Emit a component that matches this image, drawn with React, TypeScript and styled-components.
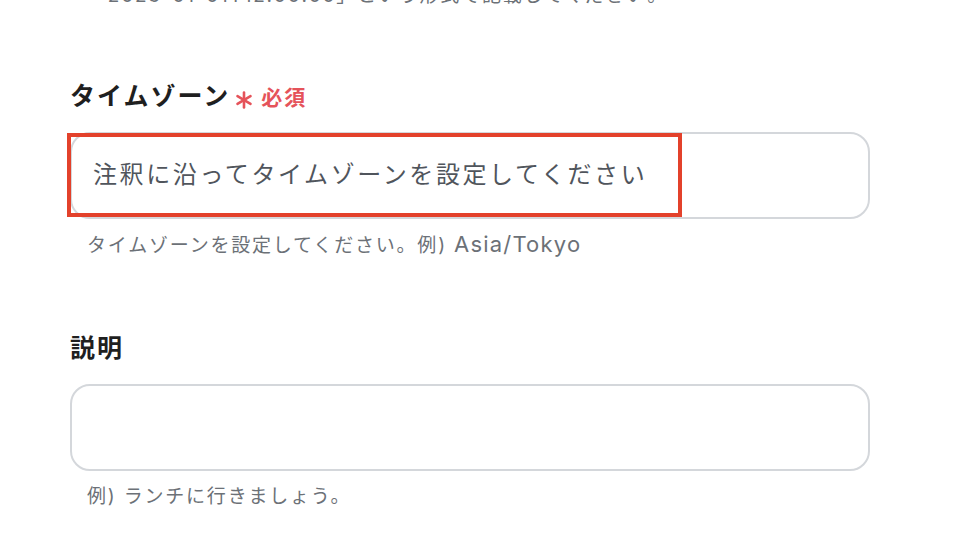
import React from "react";
import styled, { createGlobalStyle } from "styled-components";

const Global = createGlobalStyle`
  html, body { margin: 0; padding: 0; background: #ffffff; }
  body {
    font-family: "Inter", "Noto Sans CJK JP", sans-serif;
    -webkit-font-smoothing: antialiased;
  }
  * { box-sizing: border-box; }
`;

const Page = styled.main`
  width: 958px;
  height: 560px;
  overflow: hidden;
  padding-left: 70px;
  display: flex;
  flex-direction: column;
`;

const Field = styled.section`
  width: 800px;
  display: flex;
  flex-direction: column;
  & + & { margin-top: 75px; }
`;

const LabelRow = styled.div`
  height: 32px;
  display: flex;
  align-items: center;
  gap: 5px;
  margin-bottom: 20px;
`;

const Label = styled.label`
  font-size: 25px;
  font-weight: 700;
  letter-spacing: 2px;
  color: #1f1f1f;
  line-height: 32px;
`;

const Required = styled.span`
  display: inline-flex;
  align-items: center;
  gap: 8px;
  color: #e5535a;
  font-size: 21px;
  font-weight: 600;
  letter-spacing: 2px;
  line-height: 32px;
  padding-top: 3px;
`;

const Star = styled.svg`
  width: 18px;
  height: 18px;
  margin-top: 4px;
`;

const InputWrap = styled.div`
  position: relative;
  width: 800px;
`;

const TextInput = styled.input`
  width: 100%;
  height: 87px;
  border: 2px solid #d4d7db;
  border-radius: 20px;
  padding: 0 21px 2px;
  font-family: inherit;
  font-size: 24px;
  letter-spacing: 2.6px;
  color: #333;
  background: #fff;
  outline: none;
  &::placeholder { color: #50555c; opacity: 1; }
`;

const Highlight = styled.div`
  position: absolute;
  left: -3px;
  top: 1px;
  width: 615px;
  height: 84px;
  border: 4px solid #e3412b;
  pointer-events: none;
`;

const Hint = styled.p<{ $top?: boolean }>`
  margin: ${(p) => (p.$top ? "-16px 0 72px" : "14px 0 0")};
  padding-left: 17px;
  height: 24px;
  font-size: 19px;
  line-height: 24px;
  letter-spacing: 1.8px;
  color: #6c7177;
  white-space: nowrap;
`;

const Latin = styled.span`
  letter-spacing: 1.2px;
  font-size: 22px;
  line-height: 1;
`;

const Asterisk = () => (
  <Star viewBox="0 0 18 18" aria-hidden>
    <g stroke="#e5535a" strokeWidth="2.6" strokeLinecap="round">
      <line x1="9" y1="1.5" x2="9" y2="16.5" />
      <line x1="2.5" y1="5.2" x2="15.5" y2="12.8" />
      <line x1="2.5" y1="12.8" x2="15.5" y2="5.2" />
    </g>
  </Star>
);

export default function App() {
  return (
    <>
      <Global />
      <Page>
        <Hint $top>「2023-01-01T12:00:00」という形式で記載してください。</Hint>
        <Field>
          <LabelRow>
            <Label>タイムゾーン</Label>
            <Required>
              <Asterisk />
              必須
            </Required>
          </LabelRow>
          <InputWrap>
            <TextInput placeholder="注釈に沿ってタイムゾーンを設定してください" />
            <Highlight />
          </InputWrap>
          <Hint>
            タイムゾーンを設定してください。例) <Latin>Asia/Tokyo</Latin>
          </Hint>
        </Field>
        <Field>
          <LabelRow>
            <Label>説明</Label>
          </LabelRow>
          <InputWrap>
            <TextInput />
          </InputWrap>
          <Hint>例) ランチに行きましょう。</Hint>
        </Field>
      </Page>
    </>
  );
}
